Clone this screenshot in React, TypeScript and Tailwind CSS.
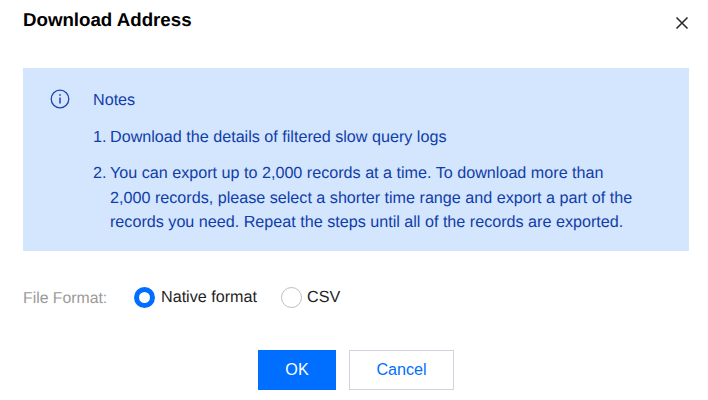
export default function App() {
  return (
    <div className="w-[708px] h-[400px] bg-white overflow-hidden pt-[8px] font-['Liberation_Sans',Arial,sans-serif] [text-rendering:geometricPrecision]">
      <div className="flex items-start justify-between pl-[23px] pr-[18px] h-[60px]">
        <h1 className="text-[18.7px] leading-6 font-bold text-black">Download Address</h1>
        <svg className="mt-[7px]" width="16" height="16" viewBox="0 0 16 16" fill="none" stroke="#2b2b2b" strokeWidth="1.6">
          <path d="M2.5 2.5 13.5 13.5M13.5 2.5 2.5 13.5" />
        </svg>
      </div>
      <div className="mx-[19px] ml-[23px] h-[183px] bg-[#d4e5fe] flex pl-[27px] pt-[20px] text-[#0f3ea8] text-[16.15px] leading-[24px]">
        <svg className="mt-[1px] shrink-0" width="20" height="20" viewBox="0 0 20 20" fill="none" stroke="#1c45ae" strokeWidth="1.3">
          <circle cx="10" cy="10" r="8.8" />
          <path d="M10 8.5V14.5" strokeWidth="1.5" />
          <path d="M10 5.2V6.8" strokeWidth="1.6" />
        </svg>
        <div className="ml-[23px] w-[580px]">
          <p>Notes</p>
          <ol className="mt-[13px] flex flex-col gap-[12px]">
            <li className="flex"><span className="w-[17px] shrink-0">1.</span><span>Download the details of filtered slow query logs</span></li>
            <li className="flex">
              <span className="w-[17px] shrink-0">2.</span>
              <span className="leading-[24.5px]">You can export up to 2,000 records at a time. To download more than<br />2,000 records, please select a shorter time range and export a part of the<br />records you need. Repeat the steps until all of the records are exported.</span>
            </li>
          </ol>
        </div>
      </div>
      <div className="flex items-center pl-[23px] mt-[34px] h-[24px] text-[16.15px]">
        <span className="w-[111px] text-[15.8px] text-[#9a9a9a] pt-[3px]">File Format:</span>
        <span className="w-[21px] h-[21px] rounded-full border-[5px] border-[#006eff] bg-white" />
        <span className="ml-[6px] text-[#1f1f1f]">Native format</span>
        <span className="ml-[24px] w-[21px] h-[21px] rounded-full border border-[#bdbdbd] bg-white" />
        <span className="ml-[5px] text-[#1f1f1f]">CSV</span>
      </div>
      <div className="flex gap-[13px] pl-[258px] mt-[41px] text-[16.15px]">
        <button className="w-[78px] h-[40px] pb-[2px] bg-[#006eff] text-white">OK</button>
        <button className="w-[105px] h-[40px] pb-[2px] bg-white border border-[#cfd5de] text-[#006eff]">Cancel</button>
      </div>
    </div>
  );
}
